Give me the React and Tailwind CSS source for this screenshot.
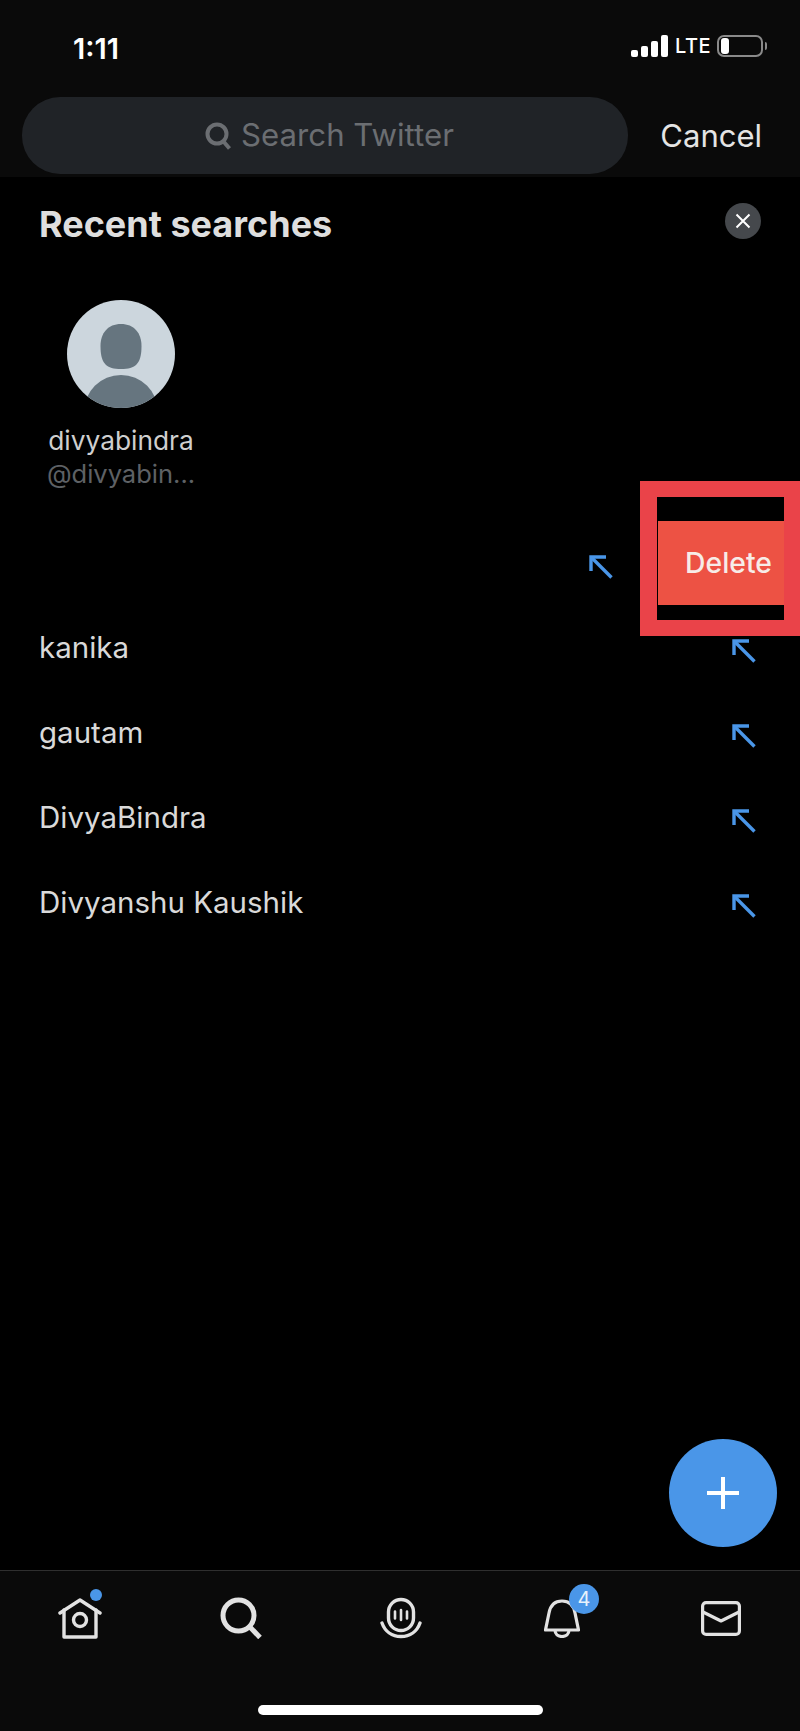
const font = { fontFamily: '"Inter","Liberation Sans",sans-serif' };

function Arrow({ className = "" }) {
  return (
    <svg width="24" height="24" viewBox="0 0 24 24" fill="none" stroke="#4a96e8" strokeWidth="3.4" className={className}>
      <path d="M22.5 22.5 2.5 2.5" />
      <path d="M2 16V2h15" />
    </svg>
  );
}

function Row({ label }) {
  return (
    <div className="flex h-[85px] items-center justify-between pl-[39px] pr-[44px]">
      <span className="mb-[6px] text-[29.5px] leading-none text-[#d9d9d9]">{label}</span>
      <Arrow />
    </div>
  );
}

function Spaces() {
  return (
    <svg width="42" height="42" viewBox="0 0 42 42" fill="none" stroke="#e2e2e2" strokeWidth="3.4" strokeLinecap="round">
      <rect x="8.5" y="2.5" width="25" height="31" rx="12.5" />
      <path d="M2 26C5 34.500 12 39.500 21 39.500S37 34.500 40 26" />
      <path d="M15 14.500v7M21 13v10M27 14.500v7" strokeWidth="2.6" />
    </svg>
  );
}

export default function App() {
  return (
    <div className="relative flex h-[1731px] w-[800px] flex-col overflow-hidden bg-black" style={font}>
      <header className="flex h-[177px] flex-col bg-[#0a0a0a]">
        <div className="flex h-[97px] items-start justify-between pl-[73px] pr-[33px] pt-[35px]">
          <span className="text-[29px] font-semibold leading-[28px] text-white">1:11</span>
          <div className="flex items-center">
            <svg width="37" height="22" viewBox="0 0 37 22" fill="white">
              <rect x="0" y="15" width="7" height="7" rx="2" />
              <rect x="10" y="11" width="7" height="11" rx="2" />
              <rect x="20" y="6" width="7" height="16" rx="2" />
              <rect x="30" y="0" width="7" height="22" rx="2" />
            </svg>
            <span className="ml-[7px] w-[33px] text-[20px] font-medium leading-none tracking-[0.5px] text-white">LTE</span>
            <div className="ml-[9px] flex h-[22px] w-[46px] items-center rounded-[7px] border-2 border-[#8a8a8a] px-[2px]">
              <div className="h-[16px] w-[8px] rounded-[3px] bg-white" />
            </div>
            <div className="ml-[2px] h-[8px] w-[2px] rounded-r-sm bg-[#8a8a8a]" />
          </div>
        </div>
        <div className="flex items-center pl-[22px] pr-[38px]">
          <div className="flex h-[77px] w-[606px] items-center justify-center rounded-[38px] bg-[#202327] pl-[9px]">
            <svg width="26" height="28" viewBox="0 0 26 28" fill="none" stroke="#6b6e72" strokeWidth="4" className="mr-[10px]">
              <circle cx="12" cy="12" r="9.5" />
              <path d="m18.5 19.5 6 7" />
            </svg>
            <span className="text-[31.2px] leading-none text-[#6b6e72]">Search Twitter</span>
          </div>
          <span className="ml-auto text-[31px] leading-none text-[#e4e4e4]">Cancel</span>
        </div>
      </header>

      <main className="relative flex-1">
        <div className="flex h-[88px] items-center justify-between pb-[1px] pl-[39px] pr-[39px]">
          <h1 className="pt-[6px] text-[36px] font-bold leading-none text-[#dedede]">Recent searches</h1>
          <div className="flex h-[36px] w-[36px] items-center justify-center rounded-full bg-[#45484c]">
            <svg width="16" height="16" viewBox="0 0 16 16" stroke="#fff" strokeWidth="2">
              <path d="M1.5 1.5l13 13M14.5 1.5l-13 13" />
            </svg>
          </div>
        </div>

        <div className="flex w-[242px] flex-col items-center pt-[35px]">
          <svg width="108" height="108" viewBox="0 0 108 108">
            <defs>
              <clipPath id="avatarClip"><circle cx="54" cy="54" r="54" /></clipPath>
            </defs>
            <circle cx="54" cy="54" r="54" fill="#ccd6dd" />
            <g clipPath="url(#avatarClip)" fill="#66757f">
              <path d="M54 24c13 0 20.500 9 20.500 22 0 18-6 23-20.500 23s-20.500-5-20.500-23c0-13 7.500-22 20.500-22z" />
              <ellipse cx="54" cy="112" rx="37" ry="37" />
            </g>
          </svg>
          <span className="mt-[17px] text-[26.3px] leading-[32px] text-[#cfcfcf]">divyabindra</span>
          <span className="mt-[1px] text-[25.5px] leading-[32px] text-[#5e6165]">@divyabin...</span>
        </div>

        <div className="mt-[36px] flex h-[82px] items-center justify-end pr-[187px]">
          <Arrow />
        </div>
        <Row label="kanika" />
        <Row label="gautam" />
        <Row label="DivyaBindra" />
        <Row label="Divyanshu Kaushik" />

        <div className="absolute left-[640px] top-[304px] h-[155px] w-[160px] border-y-[16px] border-l-[17px] border-r-[16px] border-[#ea4349] bg-black">
          <div className="ml-[1px] mt-[24px] flex h-[84px] items-center justify-center bg-[#ed5244] pl-[15px]">
            <span className="text-[28.3px] font-medium leading-none text-[#f7ece8]">Delete</span>
          </div>
        </div>

        <button className="absolute left-[669px] top-[1262px] flex h-[108px] w-[108px] items-center justify-center rounded-full bg-[#4a96e8]">
          <svg width="32" height="32" viewBox="0 0 32 32" stroke="#fff" strokeWidth="4">
            <path d="M16 0v32M0 16h32" />
          </svg>
        </button>
      </main>

      <nav className="relative h-[161px] border-t border-[#2f2f2f] bg-[#0a0a0a]">
        <div className="flex items-start pt-[26px]">
          <div className="relative ml-[58px] w-[44px]">
            <svg width="44" height="42" viewBox="0 0 44 42" fill="none" stroke="#e2e2e2" strokeWidth="3.4" strokeLinejoin="round" strokeLinecap="round">
              <path d="M2 16 22 3l20 13" />
              <path d="M6 13v27h32V13" />
              <circle cx="22" cy="23" r="6.500" />
            </svg>
            <div className="absolute left-[32px] top-[-8px] h-[12px] w-[12px] rounded-full bg-[#4a96e8]" />
          </div>
          <div className="ml-[118px] w-[42px]">
            <svg width="42" height="42" viewBox="0 0 42 42" fill="none" stroke="#e2e2e2" strokeWidth="5">
              <circle cx="18.500" cy="18.500" r="15.500" />
              <path d="m29 29 11 11.500" />
            </svg>
          </div>
          <div className="ml-[118px] w-[42px]">
            <Spaces />
          </div>
          <div className="relative ml-[122px] w-[36px] pt-[2px]">
            <svg width="36" height="39" viewBox="0 0 36 39" fill="none" stroke="#e2e2e2" strokeWidth="3.200" strokeLinejoin="round">
              <path d="M1.500 31 5 14C6.500 6 11 2 18 2s11.500 4 13 12l3.500 17z" />
              <path d="M11 31c0 4 3 6.500 7 6.500s7-2.500 7-6.500" />
            </svg>
            <div className="absolute left-[25px] top-[-13px] flex h-[30px] w-[30px] items-center justify-center rounded-full bg-[#4a96e8] text-[20px] leading-none text-[#e8f2fc]">4</div>
          </div>
          <div className="ml-[121px] w-[40px] pt-[4px]">
            <svg width="40" height="35" viewBox="0 0 40 35" fill="none" stroke="#e2e2e2" strokeWidth="3.200" strokeLinejoin="round">
              <rect x="1.600" y="1.600" width="36.800" height="31.800" rx="3.500" />
              <path d="M2 11l18 9 18-9" />
            </svg>
          </div>
        </div>
        <div className="absolute bottom-[16px] left-[258px] h-[10px] w-[285px] rounded-full bg-white" />
      </nav>
    </div>
  );
}
